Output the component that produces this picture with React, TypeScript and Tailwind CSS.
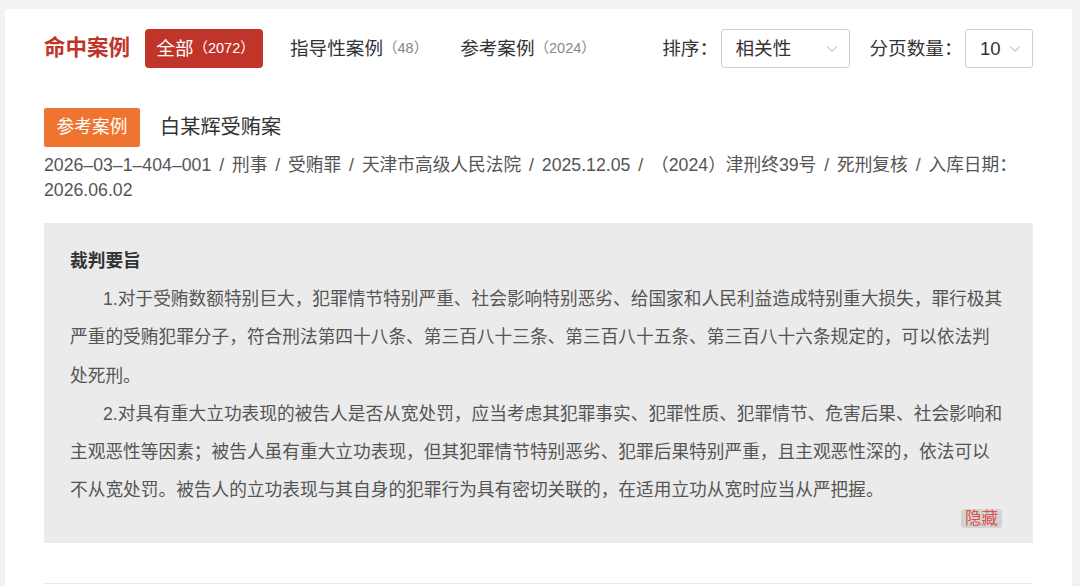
import { ChevronDown } from 'lucide-react'

const tabs = [
  { label: '指导性案例', count: '（48）' },
  { label: '参考案例', count: '（2024）' },
]

const meta = [
  '2026–03–1–404–001',
  '刑事',
  '受贿罪',
  '天津市高级人民法院',
  '2025.12.05',
  '（2024）津刑终39号',
  '死刑复核',
]

const paragraphs = [
  '1.对于受贿数额特别巨大，犯罪情节特别严重、社会影响特别恶劣、给国家和人民利益造成特别重大损失，罪行极其严重的受贿犯罪分子，符合刑法第四十八条、第三百八十三条、第三百八十五条、第三百八十六条规定的，可以依法判处死刑。',
  '2.对具有重大立功表现的被告人是否从宽处罚，应当考虑其犯罪事实、犯罪性质、犯罪情节、危害后果、社会影响和主观恶性等因素；被告人虽有重大立功表现，但其犯罪情节特别恶劣、犯罪后果特别严重，且主观恶性深的，依法可以不从宽处罚。被告人的立功表现与其自身的犯罪行为具有密切关联的，在适用立功从宽时应当从严把握。',
]

function Select({ value, width }: { value: string; width: string }) {
  return (
    <div className={`${width} h-[39px] flex items-center justify-between pl-[14px] pr-[8px] border border-[#cfcfcf] rounded-[3px] bg-white`}>
      <span className="text-[18.6px] text-[#333]">{value}</span>
      <ChevronDown size={18} strokeWidth={1.4} className="text-[#b8b8b8]" />
    </div>
  )
}

function Label({ text, className = '' }: { text: string; className?: string }) {
  return (
    <span className={`text-[18.6px] text-[#333] mr-[10px] whitespace-nowrap ${className}`}>
      {text}
      <span className="mr-[-7.5px]">：</span>
    </span>
  )
}

export default function App() {
  return (
    <div className="h-[586px] overflow-hidden bg-[#f2f2f2] pt-[9px] pl-[5px] pr-[8px] font-['Liberation_Sans','Noto_Sans_CJK_SC',sans-serif]">
      <div className="bg-white h-full px-[39px] pt-[20px]">
        {/* ── header: tabs + sort ── */}
        <div className="flex items-center h-[39px]">
          <h2 className="text-[21.5px] font-bold text-[#c0342a] mr-[15px]">命中案例</h2>
          <button className="h-[39px] w-[118px] pl-[3px] rounded-[4px] bg-[#c0342a] text-white flex items-center justify-center">
            <span className="text-[18.6px]">全部</span>
            <span className="text-[14.5px]">（2072）</span>
          </button>
          <button className="ml-[27px] flex items-center text-[#333]">
            <span className="text-[18.6px]">{tabs[0].label}</span>
            <span className="text-[14.5px] text-[#888]">{tabs[0].count}</span>
          </button>
          <button className="ml-[32px] flex items-center text-[#333]">
            <span className="text-[18.6px]">{tabs[1].label}</span>
            <span className="text-[14.5px] text-[#888]">{tabs[1].count}</span>
          </button>
          <div className="ml-auto flex items-center">
            <Label text="排序" />
            <Select value="相关性" width="w-[129px]" />
            <Label text="分页数量" className="ml-[20px]" />
            <Select value="10" width="w-[68px]" />
          </div>
        </div>

        {/* ── case item ── */}
        <div className="mt-[40px] pb-[40px] border-b border-[#e8e8e8]">
          <div className="flex items-center">
            <span className="h-[39px] w-[96px] flex items-center justify-center bg-[#ee7430] text-white text-[17.7px] rounded-[2px]">
              参考案例
            </span>
            <h3 className="ml-[20px] text-[20.2px] text-[#333]">白某辉受贿案</h3>
          </div>
          <p className="mt-[6px] text-[17.7px] leading-[25px] text-[#555] [word-spacing:3px]">
            {meta.join(' / ')} / 入库日期：<span className="whitespace-nowrap">2026.06.02</span>
          </p>

          <div className="mt-[20px] bg-[#ebebeb] pt-[19px] pb-[15px] pl-[26px] pr-[28px] text-[17.7px] leading-[38.2px] text-[#555]">
            <p className="font-bold text-[#333]">裁判要旨</p>
            {paragraphs.map((p, i) => (
              <p key={i} className="indent-[33px]">{p}</p>
            ))}
            <div className="flex justify-end pr-[3px]">
              <button className="h-[19px] px-[4px] rounded-[3px] bg-[#d3d3d3] text-[#d9534f] text-[16.5px] leading-[19px]">
                隐藏
              </button>
            </div>
          </div>
        </div>
      </div>
    </div>
  )
}
